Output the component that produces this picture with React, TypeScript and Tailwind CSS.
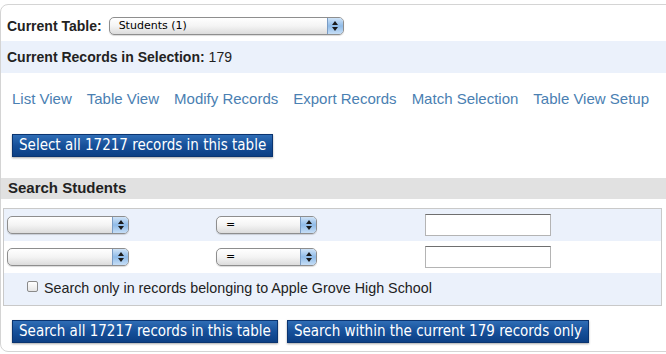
const AquaSelect = ({ width, label }: { width: string; label?: string }) => (
  <div
    className={`${width} h-[18px] flex items-stretch rounded-[5px] border border-[#8e8e8e] bg-gradient-to-b from-white via-[#f4f4f4] to-[#dcdcdc] shadow-[0_1px_1px_rgba(0,0,0,0.15)] overflow-hidden`}
  >
    <div className="flex-1 flex items-center pl-[9px] text-[11px] text-black font-['Lucida_Grande','DejaVu_Sans',sans-serif]">
      {label}
    </div>
    <div className="w-[16px] flex flex-col items-center justify-center gap-[2px] bg-gradient-to-b from-[#cfe3f7] via-[#8fbbe8] to-[#c6def6] border-l border-[#7a9cc4]">
      <span className="w-0 h-0 border-l-[3px] border-r-[3px] border-b-[4px] border-l-transparent border-r-transparent border-b-[#1a1a1a]" />
      <span className="w-0 h-0 border-l-[3px] border-r-[3px] border-t-[4px] border-l-transparent border-r-transparent border-t-[#1a1a1a]" />
    </div>
  </div>
);

const BlueButton = ({ children }: { children: string }) => (
  <button className="h-[23px] px-[6px] bg-gradient-to-b from-[#2f6db5] via-[#16509a] to-[#0c3f84] border border-[#0a3470] text-white text-[15px] leading-none font-['Liberation_Sans_Narrow','DejaVu_Sans_Condensed','Liberation_Sans',sans-serif] [font-stretch:condensed] shadow-[0_1px_2px_rgba(0,0,0,0.35)] whitespace-nowrap">
    {children}
  </button>
);

const links = [
  "List View",
  "Table View",
  "Modify Records",
  "Export Records",
  "Match Selection",
  "Table View Setup",
];

export default function App() {
  return (
    <div className="w-[666px] h-[354px] overflow-hidden bg-white font-['Liberation_Sans',Arial,sans-serif]">
      <div className="mt-[4px] w-[700px] h-[348px] border border-[#d4d4d4] rounded-[8px] pt-[11px]">
        <div className="flex items-center h-[20px] pl-[6px] gap-[7px]">
          <span className="text-[14px] font-bold text-[#222]">Current Table:</span>
          <AquaSelect width="w-[235px]" label="Students (1)" />
        </div>

        <div className="mt-[5px] h-[32px] bg-[#ebf1fb] flex items-center pl-[6px] text-[14px] text-[#222]">
          <span className="font-bold">Current Records in Selection:</span>
          <span className="ml-[4px]">179</span>
        </div>

        <div className="mt-[15px] h-[22px] flex items-center pl-[11px] gap-[15px] text-[15px] text-[#4a80b2]">
          {links.map((l) => (
            <span key={l}>{l}</span>
          ))}
        </div>

        <div className="mt-[24px] pl-[11px] flex">
          <BlueButton>Select all 17217 records in this table</BlueButton>
        </div>

        <div className="mt-[21px] h-[21px] bg-[#e1e1e1] flex items-center pl-[7px]">
          <span className="text-[15px] font-bold text-[#222]">Search Students</span>
        </div>

        <div className="mt-[9px] ml-[2px] w-[659px] border border-[#c9c9c9]">
          <div className="h-[32px] bg-[#ebf1fb] flex items-center pl-[3px]">
            <AquaSelect width="w-[122px]" />
            <div className="ml-[87px]">
              <AquaSelect width="w-[101px]" label="=" />
            </div>
            <input className="ml-[108px] w-[126px] h-[22px] bg-white border border-[#b4b4b4] border-t-[#6f6f6f]" />
          </div>
          <div className="h-[32px] bg-white flex items-center pl-[3px]">
            <AquaSelect width="w-[122px]" />
            <div className="ml-[87px]">
              <AquaSelect width="w-[101px]" label="=" />
            </div>
            <input className="ml-[108px] w-[126px] h-[22px] bg-white border border-[#b4b4b4] border-t-[#6f6f6f]" />
          </div>
          <div className="h-[32px] bg-[#ebf1fb] flex items-center pl-[23px] gap-[6px] text-[14.3px] text-[#222]">
            <span className="w-[11px] h-[11px] -mt-[6px] rounded-[2px] border border-[#8a8a8a] bg-gradient-to-b from-white to-[#e6e6e6]" />
            <span>Search only in records belonging to Apple Grove High School</span>
          </div>
        </div>

        <div className="mt-[14px] pl-[11px] flex gap-[9px]">
          <BlueButton>Search all 17217 records in this table</BlueButton>
          <BlueButton>Search within the current 179 records only</BlueButton>
        </div>
      </div>
    </div>
  );
}
